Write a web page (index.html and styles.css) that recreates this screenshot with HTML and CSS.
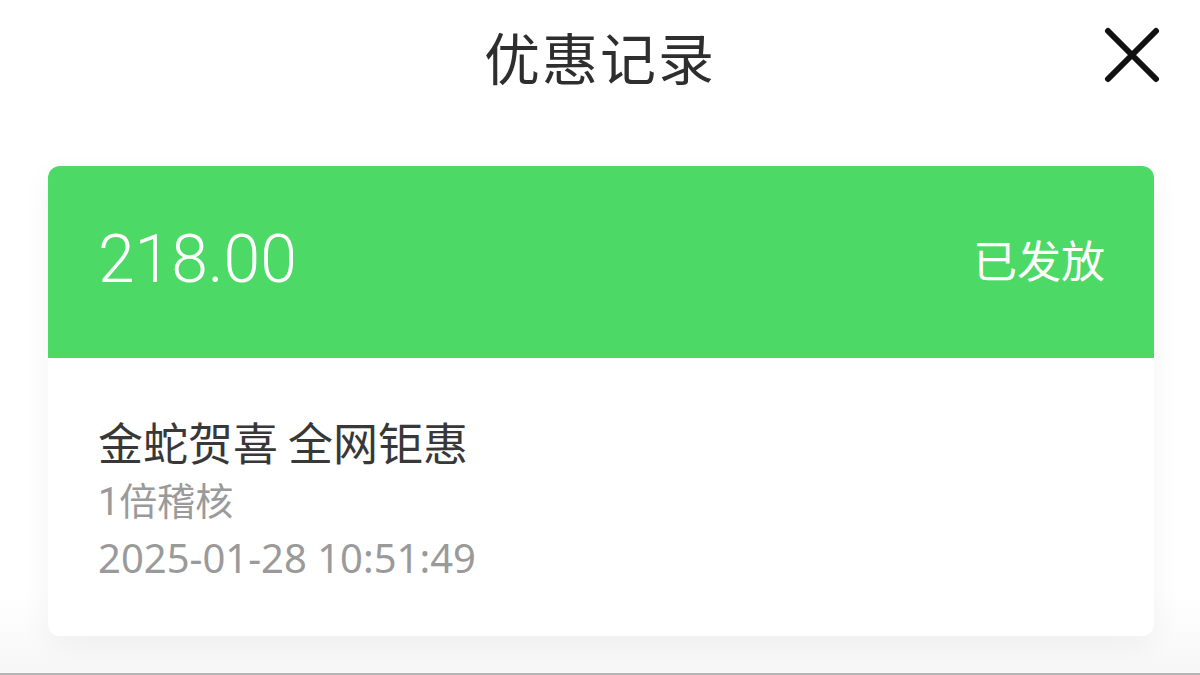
FILE: index.html
```html
<!DOCTYPE html>
<html lang="zh-CN">
<head>
    <meta charset="UTF-8">
    <meta name="viewport" content="width=device-width, initial-scale=1.0">
    <title>优惠记录</title>
    <link rel="stylesheet" href="styles.css">
</head>
<body>
    <div class="pagina">
        <div class="div-titulo">
            <span></span>
            <h1>优惠记录</h1>
            <button class="btn-cerrar" aria-label="关闭">
                <svg width="56" height="56" viewBox="0 0 56 56">
                    <path d="M4 4 L52 52 M52 4 L4 52" stroke="#111" stroke-width="6" stroke-linecap="round" fill="none"/>
                </svg>
            </button>
        </div>

        <div class="tarjeta">
            <div class="tarjeta-cabecera">
                <span class="monto">218.00</span>
                <span class="estado">已发放</span>
            </div>
            <div class="tarjeta-cuerpo">
                <p class="nombre">金蛇贺喜 全网钜惠</p>
                <p class="detalle">1倍稽核</p>
                <p class="detalle fecha">2025-01-28 10:51:49</p>
            </div>
        </div>
    </div>
</body>
</html>
```

FILE: styles.css
```css
*{
    margin: 0;
    padding: 0;
    box-sizing: border-box;
}
body{
    background-color: #fff;
    font-family: Roboto, "Noto Sans CJK SC", sans-serif;
}
.pagina{
    width: 100%;
    height: 675px;
    border-bottom: 2px solid #b4b4b4;
    background: linear-gradient(#fff 590px, #f7f7f7 673px);
}
.div-titulo{
    height: 166px;
    padding: 0 40px 56px;
    display: grid;
    grid-template-columns: 1fr auto 1fr;
    align-items: center;
}
.div-titulo h1{
    font-family: "Noto Sans CJK SC", sans-serif;
    font-weight: 400;
    font-size: 56px;
    color: #2e2e2e;
    letter-spacing: 2px;
}
.btn-cerrar{
    justify-self: end;
    background: none;
    border: none;
    display: flex;
}
/* tarjeta */
.tarjeta{
    margin: 0 46px 0 48px;
    height: 470px;
    background-color: #fff;
    border-radius: 12px;
    overflow: hidden;
    box-shadow: 0 10px 30px rgba(0, 0, 0, 0.05);
}
.tarjeta-cabecera{
    height: 192px;
    background-color: #4dd966;
    color: #fff;
    padding: 0 49px 0 50px;
    display: flex;
    justify-content: space-between;
    align-items: center;
}
.monto{
    font-size: 66px;
    font-weight: 300;
    margin-top: -6px;
}
.estado{
    font-family: "Noto Sans CJK SC", sans-serif;
    font-size: 44px;
    margin-top: -6px;
}
.tarjeta-cuerpo{
    padding: 52px 50px 0;
    display: flex;
    flex-direction: column;
}
.nombre{
    font-family: "Noto Sans CJK SC", sans-serif;
    font-size: 45px;
    line-height: 64px;
    color: #383838;
}
.detalle{
    font-size: 38px;
    line-height: 56px;
    color: #9a9a9a;
}
.fecha{
    font-family: "Noto Sans", sans-serif;
    font-size: 40px;
}
```
